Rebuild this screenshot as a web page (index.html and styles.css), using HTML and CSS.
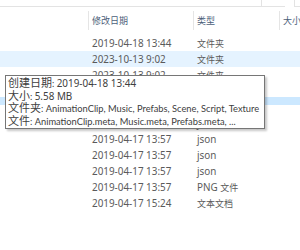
FILE: index.html
```html
<!DOCTYPE html>
<html lang="zh-CN">
<head>
<meta charset="utf-8">
<title>文件列表</title>
<link rel="stylesheet" href="styles.css">
</head>
<body>
<div class="window">
  <div class="topbar">
    <div class="tb tb-main"></div>
    <div class="tb tb-btn"></div>
    <div class="tb-gap"></div>
    <div class="tb tb-edge"></div>
  </div>
  <div class="list">
    <div class="head">
      <div class="hcell">&nbsp;</div>
      <div class="hcell"><span class="cjk">修改日期</span></div>
      <div class="hcell"><span class="cjk">类型</span></div>
      <div class="hcell last"><span class="cjk">大小</span></div>
    </div>
    <div class="row"><div class="cell"></div><div class="cell">2019-04-18 13:44</div><div class="cell"><span class="cjk">文件夹</span></div><div class="cell"></div></div>
    <div class="row hover"><div class="cell"></div><div class="cell">2023-10-13 9:02</div><div class="cell"><span class="cjk">文件夹</span></div><div class="cell"></div></div>
    <div class="row"><div class="cell"></div><div class="cell">2023-10-13 9:02</div><div class="cell"><span class="cjk">文件夹</span></div><div class="cell"></div></div>
    <div class="row sel-top"><div class="cell"></div><div class="cell">2023-10-13 9:02</div><div class="cell"><span class="cjk">文件夹</span></div><div class="cell"></div></div>
    <div class="row sel-bottom"><div class="cell"></div><div class="cell">2019-04-18 13:44</div><div class="cell"><span class="cjk">文件夹</span></div><div class="cell"></div></div>
    <div class="row"><div class="cell"></div><div class="cell">2019-04-17 13:57</div><div class="cell">json</div><div class="cell"></div></div>
    <div class="row"><div class="cell"></div><div class="cell">2019-04-17 13:57</div><div class="cell">json</div><div class="cell"></div></div>
    <div class="row"><div class="cell"></div><div class="cell">2019-04-17 13:57</div><div class="cell">json</div><div class="cell"></div></div>
    <div class="row"><div class="cell"></div><div class="cell">2019-04-17 13:57</div><div class="cell">json</div><div class="cell"></div></div>
    <div class="row"><div class="cell"></div><div class="cell">2019-04-17 13:57</div><div class="cell">PNG <span class="cjk">文件</span></div><div class="cell"></div></div>
    <div class="row"><div class="cell"></div><div class="cell">2019-04-17 15:24</div><div class="cell"><span class="cjk">文本文档</span></div><div class="cell"></div></div>
  </div>
  <div class="tooltip">
    <div class="tline"><span class="tcjk">创建日期</span>: <span class="tnum">2019-04-18 13:44</span></div>
    <div class="tline"><span class="tcjk">大小</span>: <span class="tnum">5.58 MB</span></div>
    <div class="tline"><span class="tcjk">文件夹</span>: AnimationClip, Music, Prefabs, Scene, Script, Texture</div>
    <div class="tline"><span class="tcjk">文件</span>: AnimationClip.meta, Music.meta, Prefabs.meta, ...</div>
  </div>
</div>
</body>
</html>
```
FILE: styles.css
```css
html, body {
  margin: 0;
  padding: 0;
  background: #ffffff;
}
body {
  font-family: "Noto Sans", "Noto Sans CJK SC", sans-serif;
  font-size: 9.9px;
  color: #5a5a5a;
  width: 300px;
  height: 250px;
  overflow: hidden;
}
.window {
  position: relative;
  width: 300px;
  height: 250px;
}
.topbar {
  display: flex;
  height: 7px;
}
.tb {
  box-sizing: border-box;
  height: 7px;
  border-bottom: 1px solid #e3e3e3;
}
.tb-main {
  flex: 1;
}
.tb-btn {
  width: 24px;
  border-left: 1px solid #e3e3e3;
}
.tb-gap {
  width: 9px;
}
.tb-edge {
  width: 6px;
  border-left: 1px solid #e3e3e3;
}
.list {
  display: flex;
  flex-direction: column;
}
.head, .row {
  display: grid;
  grid-template-columns: 89px 105px 86px 1fr;
  white-space: nowrap;
}
.head {
  padding: 4px 0 5px;
  height: 19px;
  color: #4c607a;
}
.hcell {
  box-sizing: border-box;
  height: 19px;
  line-height: 19px;
  padding-left: 3px;
  border-right: 1px solid #e5e5e5;
  overflow: hidden;
}
.hcell.last {
  border-right: 0;
}
.row {
  height: 16px;
  line-height: 16px;
}
.cell {
  padding-left: 3px;
  overflow: hidden;
}
.row.hover {
  background: #e5f3ff;
}
.row.sel-top {
  background: linear-gradient(to bottom, transparent 14px, #cce8ff 14px);
}
.row.sel-bottom {
  background: linear-gradient(to bottom, #cce8ff 6px, transparent 6px);
}
.cjk {
  font-family: "Noto Sans CJK SC", sans-serif;
  font-size: 9px;
}
.tooltip {
  position: absolute;
  left: 5px;
  top: 75px;
  width: 260px;
  box-sizing: border-box;
  background: #ffffff;
  border: 1px solid #767676;
  box-shadow: 2px 2px 2px rgba(0, 0, 0, 0.22);
  padding: 0 2px 2px 2px;
  font-family: "Lato", "Noto Sans CJK SC", sans-serif;
  font-size: 9.3px;
  color: #404040;
  white-space: nowrap;
}
.tline {
  height: 12.5px;
  line-height: 12.5px;
}
.tcjk {
  font-family: "Noto Sans CJK SC", sans-serif;
  font-size: 11px;
}
.tnum {
  font-family: "Noto Sans", sans-serif;
  font-size: 9.9px;
}
```
